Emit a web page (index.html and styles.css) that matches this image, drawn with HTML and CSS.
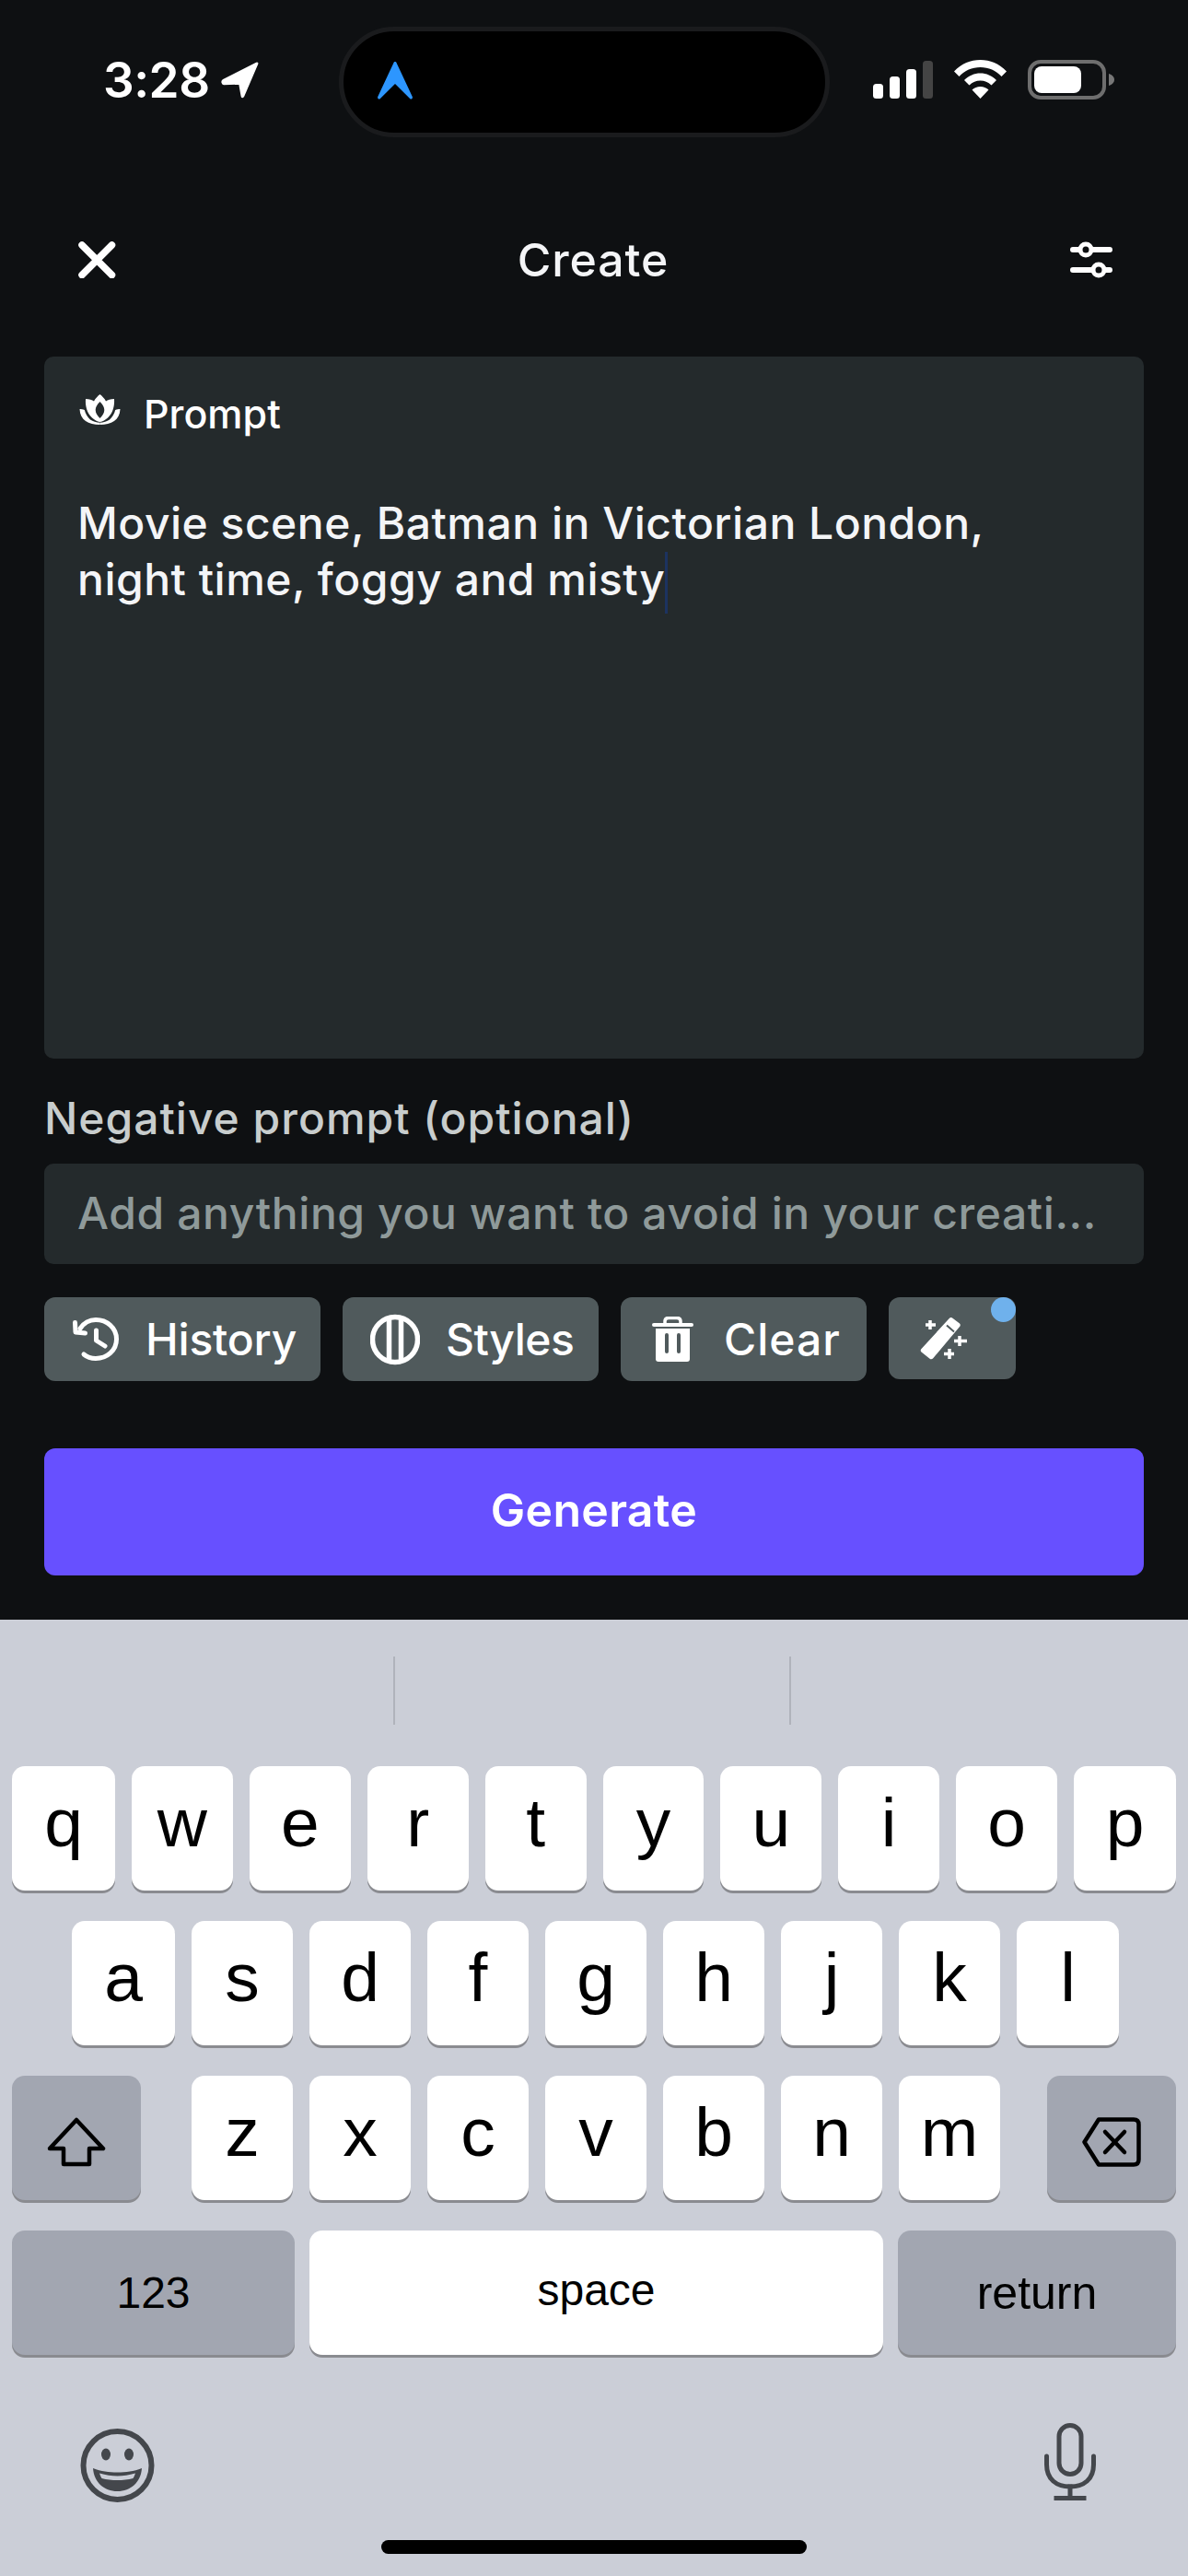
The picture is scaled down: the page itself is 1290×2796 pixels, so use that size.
FILE: index.html
```html
<!DOCTYPE html>
<html lang="en">
<head>
<meta charset="utf-8">
<title>Create</title>
<link rel="stylesheet" href="styles.css">
</head>
<body>
<div class="phone">
  <section class="app">
    <div class="status">
      <div class="status-left">
        <span class="time">3:28</span>
        <svg class="loc" viewBox="0 0 41 40"><path d="M2 20 38.500 1.500c1-.5 1.500 0 1 1L24.500 37.500c-.7 1.500-2 1.300-2.200-.4L20 24 3 24.500c-2 0-2.500-3.500-1-4.500Z" fill="#fff" stroke="#fff" stroke-width="1.500" stroke-linejoin="round"/></svg>
      </div>
      <div class="island">
        <svg class="island-arrow" viewBox="0 0 38 41"><path d="M19 0c1 0 1.500.6 1.800 1.700L37.800 38c.6 1.900-1.200 3.300-2.700 2L19 24 2.900 40c-1.500 1.300-3.300-.1-2.700-2L17.200 1.700C17.500.6 18 0 19 0Z" fill="#2d96ff"/></svg>
      </div>
      <div class="status-right">
        <svg class="signal" viewBox="0 0 65 41"><rect x="0" y="25" width="11" height="16" rx="3.500" fill="#fff"/><rect x="18" y="17" width="11" height="24" rx="3.500" fill="#fff"/><rect x="36" y="9" width="11" height="32" rx="3.500" fill="#fff"/><rect x="54" y="0" width="11" height="41" rx="3.500" fill="#444"/></svg>
        <svg class="wifi" viewBox="0 0 57 42"><path d="M28.500 0C39 0 49 4 57 12.500L51.500 18C45.500 11.500 37.500 8 28.500 8S11.500 11.500 5.500 18L0 12.500C8 4 18 0 28.500 0Z" fill="#fff"/><path d="M28.500 14.500C35 14.500 41 17 46 22L40.500 27.500C37 24.300 33 22.500 28.500 22.500S20 24.300 16.500 27.500L11 22C16 17 22 14.500 28.500 14.500Z" fill="#fff"/><path d="M28.500 29c3.500 0 6.500 1.200 9 3.500L28.500 42 19.500 32.500C22 30.200 25 29 28.500 29Z" fill="#fff"/></svg>
        <svg class="battery" viewBox="0 0 94 43"><rect x="2" y="2" width="81" height="39" rx="12" fill="none" stroke="#6e6e6e" stroke-width="4"/><rect x="7" y="7" width="51" height="29" rx="8" fill="#fff"/><path d="M88 15c3.500 1 6 3.500 6 6.500S91.500 27 88 28Z" fill="#777"/></svg>
      </div>
    </div>

    <header class="topbar">
      <svg class="close" viewBox="0 0 41 40"><path d="M4 4 36.500 36.500M36.500 4 4 36.500" fill="none" stroke="#fff" stroke-width="7.500" stroke-linecap="round"/></svg>
      <h1 class="title">Create</h1>
      <svg class="tune" viewBox="0 0 46 40"><g fill="none" stroke="#fff"><path d="M3 9h40M3 31h40" stroke-width="6" stroke-linecap="round"/><circle cx="17" cy="9" r="6" fill="#0e1012" stroke-width="5"/><circle cx="31" cy="31" r="6" fill="#0e1012" stroke-width="5"/></g></svg>
    </header>

    <main class="form">
      <div class="card">
        <div class="card-label">
          <svg class="lotus" viewBox="0 0 45 33"><path d="M22.500 0C25 2 27.500 4.500 29 7.500 31 6 34 5 38 5 38.500 12 37 20 31 25.500 28.500 27.800 25.500 29.500 22.500 30 19.500 29.500 16.500 27.800 14 25.500 8 20 6.500 12 7 5 11 5 14 6 16 7.500 17.500 4.500 20 2 22.500 0Z" fill="#fff"/><path d="M22.500 8C25.500 11 27.300 14 27.300 17S25.500 23 22.500 26C19.500 23 17.700 20 17.700 17S19.500 11 22.500 8Z" fill="#242a2c"/><path d="M.5 16C2 16 4 16.300 5.800 17 6.800 21 9 25 12 27.500 15 29.500 18.500 30.500 22.500 30.800V33C10 33 1 28 .5 16Z" fill="#fff"/><path d="M44.500 16C43 16 41 16.300 39.200 17 38.200 21 36 25 33 27.500 30 29.500 26.500 30.500 22.500 30.800V33C35 33 44 28 44.500 16Z" fill="#fff"/></svg>
          <span>Prompt</span>
        </div>
        <p class="prompt-text">Movie scene, Batman in Victorian London,<br>night time, foggy and misty<span class="caret"></span></p>
      </div>

      <label class="neg-label">Negative prompt (optional)</label>
      <div class="neg-input">Add anything you want to avoid in your creati...</div>

      <div class="actions">
        <button class="chip chip-history">
          <svg class="chip-icon icon-history" viewBox="0 0 50 47"><g fill="none" stroke="#fff" stroke-width="5" stroke-linecap="round" stroke-linejoin="round"><path d="M8 12C12 6 18 2.500 25 2.500 37 2.500 47.500 11 47.500 23.500S37 44.500 25 44.500C20 44.500 15.500 43 12 40"/><path d="M2.500 5.500 3 16 13.500 17"/><path d="M25.500 14V25L35 31"/></g></svg>
          <span>History</span>
        </button>
        <button class="chip chip-styles">
          <svg class="chip-icon icon-styles" viewBox="0 0 54 56"><g fill="none" stroke="#fff"><circle cx="27" cy="28" r="24.500" stroke-width="5.500"/><path d="M20.500 4V52M33.500 4V52" stroke-width="5.500"/></g></svg>
          <span>Styles</span>
        </button>
        <button class="chip chip-clear">
          <svg class="chip-icon icon-trash" viewBox="0 0 45 49"><path d="M14 7V5C14 2.500 16 1.500 18 1.500H27C29 1.500 31 2.500 31 5V7" fill="none" stroke="#fff" stroke-width="3.500"/><rect x="0" y="7" width="45" height="4" rx="2" fill="#fff"/><path d="M4 13H41V46C41 48 40 49 38 49H7C5 49 4 48 4 46Z" fill="#fff"/><path d="M16 20V38M29 20V38" stroke="#505a5c" stroke-width="4" stroke-linecap="round"/></svg>
          <span>Clear</span>
        </button>
        <button class="chip chip-magic">
          <svg class="chip-icon icon-wand" viewBox="0 0 51 46"><path d="M32 .8c1-1 2.400-1 3.400 0L43 6.500c1 1 1 2.400 0 3.400L14 44.500c-1 1-2.400 1-3.400.2L1.500 37.500C.5 36.600.4 35.200 1.300 34.200Z" fill="#fff"/><path d="M29 8.500 37 15.500" stroke="#505a5c" stroke-width="2"/><path d="M11 3V13M6 8H17M43 20V31M37 25.500H51M32 34V45M26 39.500H37" stroke="#fff" stroke-width="3.500" fill="none"/></svg>
          <span class="dot"></span>
        </button>
      </div>

      <button class="generate">Generate</button>
    </main>
  </section>

  <section class="keyboard">
    <div class="predict"><span class="predict-cell"></span><span class="predict-cell"></span><span class="predict-cell"></span></div>
    <div class="rows">
      <div class="row row-top">
        <span class="key">q</span><span class="key">w</span><span class="key">e</span><span class="key">r</span><span class="key">t</span><span class="key">y</span><span class="key">u</span><span class="key">i</span><span class="key">o</span><span class="key">p</span>
      </div>
      <div class="row row-mid">
        <span class="key">a</span><span class="key">s</span><span class="key">d</span><span class="key">f</span><span class="key">g</span><span class="key">h</span><span class="key">j</span><span class="key">k</span><span class="key">l</span>
      </div>
      <div class="row row-low">
        <span class="key key-fn key-side">
          <svg class="shift" viewBox="0 0 64 54"><path d="M32 3 61 34H46V51H18V34H3Z" fill="none" stroke="#000" stroke-width="4.500" stroke-linejoin="round"/></svg>
        </span>
        <div class="letters"><span class="key">z</span><span class="key">x</span><span class="key">c</span><span class="key">v</span><span class="key">b</span><span class="key">n</span><span class="key">m</span></div>
        <span class="key key-fn key-side">
          <svg class="backspace" viewBox="0 0 64 54"><path d="M18 2.500H56C59.500 2.500 61.500 4.500 61.500 8V46C61.500 49.500 59.500 51.500 56 51.500H18L2.500 27Z" fill="none" stroke="#000" stroke-width="4.500" stroke-linejoin="round"/><path d="M25 16 46 38M46 16 25 38" stroke="#000" stroke-width="4.500" stroke-linecap="round"/></svg>
        </span>
      </div>
      <div class="row row-bottom">
        <span class="key key-fn key-num"><span class="label-num">123</span></span>
        <span class="key key-space"><span class="label-space">space</span></span>
        <span class="key key-fn key-return"><span class="label-num label-return">return</span></span>
      </div>
    </div>
    <div class="kb-foot">
      <svg class="emoji" viewBox="0 0 81 80"><circle cx="40.500" cy="40" r="37" fill="none" stroke="#44474c" stroke-width="6"/><ellipse cx="28" cy="28" rx="5" ry="6.500" fill="#44474c"/><ellipse cx="53" cy="28" rx="5" ry="6.500" fill="#44474c"/><path d="M14 43C23 46.500 31 47.500 40.500 47.500S58 46.500 67 43C66 58 55 68 40.500 68S15 58 14 43Z" fill="#44474c"/><path d="M21 48.500C28 50.500 34 51.500 40.500 51.500S53 50.500 60 48.500C59 51 58.500 52.500 57.500 54C52 55.500 46.500 56 40.500 56S29 55.500 23.500 54C22.500 52.500 22 51 21 48.500Z" fill="#cbced7"/></svg>
      <svg class="mic" viewBox="0 0 56 84"><g fill="none" stroke="#44474c" stroke-width="5"><rect x="16" y="2.500" width="24" height="53" rx="12"/><path d="M2.500 36V45C2.500 61 13 69 28 69S53.500 61 53.500 45V36" stroke-linecap="round"/><path d="M28 69V81M13 81.500H43" stroke-linecap="square"/></g></svg>
    </div>
    <div class="home-bar"></div>
  </section>
</div>
</body>
</html>
```
FILE: styles.css
```css
* { box-sizing: border-box; }
html, body { margin: 0; padding: 0; }
body { width: 1290px; height: 2796px; overflow: hidden; background: #0e1012; font-family: "Inter", "Liberation Sans", sans-serif; }
.phone { width: 1290px; height: 2796px; display: flex; flex-direction: column; }

.app { height: 1758px; background: #0e1012; color: #fff; }

.status { display: grid; grid-template-columns: 368px 533px 1fr; padding-top: 29px; height: 149px; }
.status-left { display: flex; align-items: center; padding: 0 0 4px 112px; }
.time { font-family: "Inter", sans-serif; font-weight: 600; font-size: 53px; line-height: 1; letter-spacing: -.5px; width: 128px; }
.loc { width: 41px; height: 40px; }
.island { background: #000; border: 5px solid #1a1b1d; border-radius: 60px; height: 120px; display: flex; align-items: center; padding: 0 0 0 37px; }
.island-arrow { width: 38px; height: 41px; margin-top: -4px; }
.status-right { display: flex; align-items: flex-start; padding: 36px 0 0 47px; }
.signal { width: 65px; height: 41px; margin-top: 1px; }
.wifi { width: 57px; height: 42px; margin-left: 23px; }
.battery { width: 94px; height: 43px; margin-left: 23px; }

.topbar { display: flex; align-items: center; justify-content: space-between; height: 80px; margin-top: 93px; padding: 0 82px 0 85px; position: relative; }
.close { width: 41px; height: 40px; }
.tune { width: 46px; height: 40px; }
.title { margin: 0; font-size: 50px; font-weight: 500; line-height: 80px; letter-spacing: .9px; color: #f4f5f7; flex: 1; text-align: center; }

.form { padding: 65px 48px 0; }
.card { height: 762px; background: #242a2c; border-radius: 10px; padding: 36px 36px 0 38px; }
.card-label { display: flex; align-items: center; gap: 25px; height: 52px; font-size: 43px; font-weight: 500; color: #fff; }
.lotus { width: 45px; height: 33px; margin-top: -10px; }
.prompt-text { margin: 62px 0 0 -2px; font-size: 48px; font-weight: 500; line-height: 61px; letter-spacing: .5px; color: #f4f5f7; }
.caret { display: inline-block; width: 3px; height: 67px; background: #1c3360; vertical-align: -20px; margin-right: -3px; }

.neg-label { display: block; margin-top: 33px; height: 81px; font-size: 48px; font-weight: 500; line-height: 64px; letter-spacing: 1px; color: #c8cdcd; }
.neg-input { height: 109px; background: #242a2c; border-radius: 10px; padding: 0 36px; font-size: 48px; font-weight: 500; line-height: 108px; letter-spacing: .6px; color: #8f9a9a; white-space: nowrap; overflow: hidden; }

.actions { display: flex; gap: 24px; margin-top: 36px; align-items: flex-start; }
.chip { position: relative; display: flex; align-items: center; height: 91px; border: 0; border-radius: 12px; background: #505a5c; color: #fff; font: inherit; font-size: 48px; font-weight: 500; padding: 0; overflow: visible; }
.chip span { line-height: 1; }
.chip-history { width: 300px; padding-left: 31px; gap: 29px; letter-spacing: -.2px; }
.chip-styles { width: 278px; padding-left: 30px; gap: 28px; letter-spacing: -.5px; }
.chip-clear { width: 267px; padding-left: 34px; gap: 33px; letter-spacing: 1px; }
.chip-magic { width: 138px; height: 89px; padding-left: 34px; }
.icon-history { width: 50px; height: 47px; }
.icon-styles { width: 54px; height: 56px; }
.icon-trash { width: 45px; height: 49px; }
.icon-wand { width: 51px; height: 46px; }
.dot { position: absolute; top: 0; right: 0; width: 27px; height: 27px; border-radius: 50%; background: #6fb1ec; }

.generate { display: block; width: 100%; height: 138px; margin-top: 73px; border: 0; border-radius: 12px; background: #6750ff; color: #fff; font: inherit; font-size: 50px; font-weight: 600; letter-spacing: .3px; line-height: 134px; padding: 0 0 4px; text-align: center; }

.keyboard { flex: 1; background: #cbced7; position: relative; font-family: "Liberation Sans", Arial, sans-serif; color: #000; }
.predict { display: grid; grid-template-columns: 429px 430px 1fr; padding-top: 40px; height: 159px; }
.predict-cell { height: 74px; border-right: 2px solid #b0b3bb; }
.predict-cell:last-child { border-right: 0; }

.rows { display: flex; flex-direction: column; gap: 33px; }
.row { display: flex; height: 135px; gap: 18px; }
.row-top { padding: 0 13px; }
.row-mid { padding: 0 75px 0 78px; }
.row-top .key, .row-mid .key { flex: 1; }
.row-top .key:first-child, .row-mid .key:first-child { flex: 0 0 112px; }
.row-top .key:last-child, .row-mid .key:last-child { flex: 0 0 111px; }
.row-low { padding: 0 13px; gap: 0; }
.letters { display: flex; gap: 18px; width: 878px; margin: 0 auto 0 55px; }
.letters .key { flex: 1; }
.row-bottom { padding: 0 13px; gap: 16px; }

.key { display: flex; align-items: center; justify-content: center; height: 135px; background: #fff; border-radius: 14px; box-shadow: 0 3px 0 #8a8b90; font-size: 75px; line-height: 1; padding-bottom: 12px; }
.key-fn { background: #a2a6b1; padding-bottom: 0; }
.key-side { width: 140px; }
.key-num { width: 307px; }
.key-space { flex: 1; padding-bottom: 6px; }
.key-return { width: 302px; }
.label-num { font-size: 48px; }
.label-return { font-size: 50px; }
.label-space { font-size: 48px; }
.shift, .backspace { width: 64px; height: 54px; margin-top: 8px; }

.kb-foot { display: flex; justify-content: space-between; align-items: flex-start; padding: 74px 100px 0 87px; }
.emoji { width: 81px; height: 80px; margin-top: 6px; }
.mic { width: 56px; height: 84px; }

.home-bar { position: absolute; left: 414px; bottom: 24px; width: 462px; height: 15px; border-radius: 8px; background: #000; }
```
